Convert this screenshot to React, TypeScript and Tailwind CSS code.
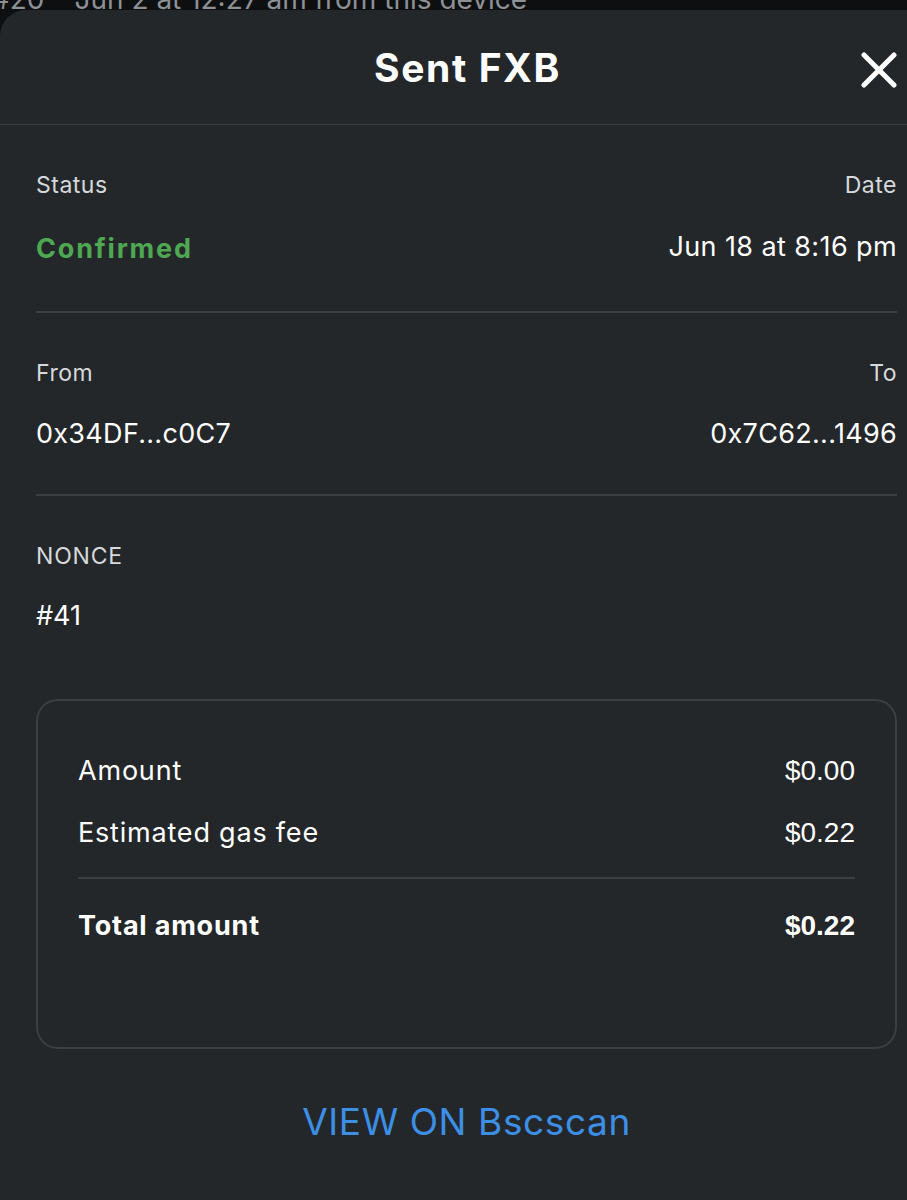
import React from "react";

const font = { fontFamily: "Inter, 'Noto Sans', sans-serif" };
const numFont = { fontFamily: "'Liberation Sans', Arial, sans-serif" };

export default function App() {
  return (
    <div className="w-[907px] h-[1200px] bg-[#0e0f11] overflow-hidden" style={font}>
      {/* list row behind the sheet, mostly hidden */}
      <div className="h-[10px] overflow-hidden">
        <div className="flex gap-[30px] -mt-[18px] -ml-[8px] text-[28px] leading-[34px] text-[#8d9094] whitespace-nowrap">
          <span>#20</span>
          <span>Jun 2 at 12:27 am from this device</span>
        </div>
      </div>

      <div className="bg-[#24272a] rounded-tl-[26px] h-[1190px] flex flex-col">
        {/* header */}
        <div className="h-[115px] flex items-center justify-center relative border-b border-[#3b3e42]">
          <h1 className="text-[39px] font-bold text-white tracking-[1.6px] mt-[3px] pl-[28px]">Sent FXB</h1>
          <button className="absolute right-[8px] top-[40px] w-[40px] h-[40px] flex items-center justify-center">
            <svg width="36" height="36" viewBox="0 0 36 36" fill="none">
              <path d="M3 3L33 33M33 3L3 33" stroke="white" strokeWidth="5" strokeLinecap="round" />
            </svg>
          </button>
        </div>

        <div className="pl-[36px] pr-[10px]">
          {/* status / date */}
          <div className="flex justify-between pt-[44px] pb-[44px] border-b-2 border-[#3b3e42]">
            <div className="flex flex-col">
              <span className="text-[23px] leading-[32px] text-[#d6d9dc] tracking-[0.5px]">Status</span>
              <span className="mt-[30px] text-[27px] leading-[36px] font-bold text-[#4ea852] tracking-[1.8px]">Confirmed</span>
            </div>
            <div className="flex flex-col items-end">
              <span className="text-[23px] leading-[32px] text-[#d6d9dc] tracking-[0.5px]">Date</span>
              <span className="mt-[28px] text-[27px] leading-[36px] text-white tracking-[0.4px]">Jun 18 at 8:16 pm</span>
            </div>
          </div>

          {/* from / to */}
          <div className="flex justify-between pt-[44px] pb-[42px] border-b-2 border-[#3b3e42]">
            <div className="flex flex-col">
              <span className="text-[23px] leading-[32px] text-[#d6d9dc] tracking-[0.5px]">From</span>
              <span className="mt-[27px] text-[27px] leading-[36px] text-white tracking-[0.3px]">0x34DF...c0C7</span>
            </div>
            <div className="flex flex-col items-end">
              <span className="text-[23px] leading-[32px] text-[#d6d9dc] tracking-[0.5px]">To</span>
              <span className="mt-[27px] text-[27px] leading-[36px] text-white tracking-[0.3px]">0x7C62...1496</span>
            </div>
          </div>

          {/* nonce */}
          <div className="flex flex-col pt-[44px] pb-[65px]">
            <span className="text-[23px] leading-[32px] text-[#d6d9dc] tracking-[0.8px]">NONCE</span>
            <span className="mt-[26px] text-[27px] leading-[36px] text-white">#41</span>
          </div>

          {/* totals box */}
          <div className="border-2 border-[#3b3e42] rounded-[22px] h-[350px] pt-[50px] px-[40px]">
            <div className="flex justify-between items-center h-[40px]">
              <span className="text-[27px] text-white tracking-[0.8px]">Amount</span>
              <span className="text-[28px] text-white" style={numFont}>$0.00</span>
            </div>
            <div className="flex justify-between items-center h-[40px] mt-[22px]">
              <span className="text-[27px] text-white tracking-[0.8px]">Estimated gas fee</span>
              <span className="text-[28px] text-white" style={numFont}>$0.22</span>
            </div>
            <div className="h-[2px] bg-[#3b3e42] mt-[24px]" />
            <div className="flex justify-between items-center h-[40px] mt-[27px]">
              <span className="text-[27px] font-bold text-white tracking-[0.8px]">Total amount</span>
              <span className="text-[28px] font-bold text-white" style={numFont}>$0.22</span>
            </div>
          </div>

          <div className="flex justify-center mt-[50px]">
            <a className="text-[37px] leading-[46px] text-[#3d8fe6] tracking-[0.6px]">VIEW ON Bscscan</a>
          </div>
        </div>
      </div>
    </div>
  );
}
